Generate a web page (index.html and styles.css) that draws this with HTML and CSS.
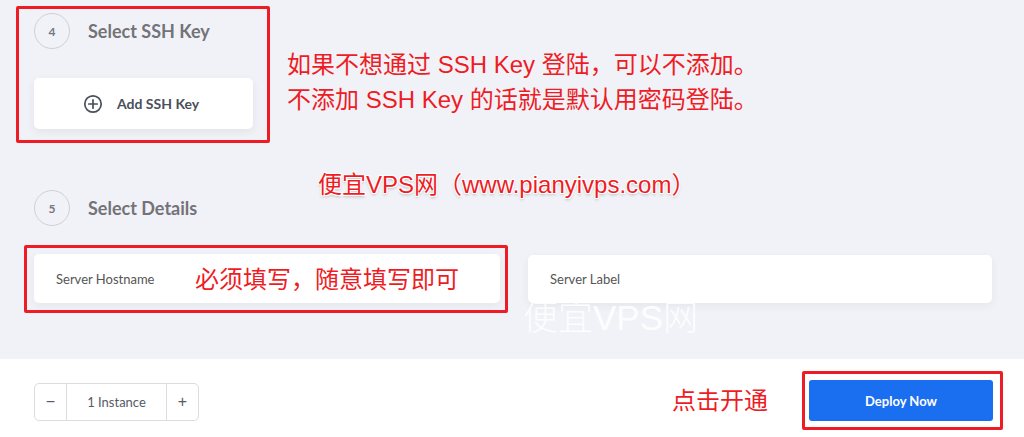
FILE: index.html
```html
<!DOCTYPE html>
<html lang="zh">

<head>
    <meta charset="UTF-8">
    <meta name="viewport" content="width=device-width, initial-scale=1.0">
    <link rel="stylesheet" href="styles.css">
</head>

<body>

    <div class="page">
        <div class="steps">
            <!-- Step 4 -->
            <div class="mark mark-ssh">
                <div class="step-head">
                    <span class="step-num">4</span>
                    <h2 class="step-title">Select SSH Key</h2>
                </div>
                <button class="add-card" type="button">
                    <svg width="20" height="20" viewBox="0 0 20 20">
                        <circle cx="10" cy="10" r="8.2" fill="none" stroke="#4a4f5c" stroke-width="1.7"/>
                        <path d="M10 5.8v8.4M5.8 10h8.4" stroke="#4a4f5c" stroke-width="1.7" stroke-linecap="round"/>
                    </svg>
                    <span>Add SSH Key</span>
                </button>
            </div>

            <!-- Step 5 -->
            <div class="step-head step-five">
                <span class="step-num">5</span>
                <h2 class="step-title">Select Details</h2>
            </div>
            <div class="details">
                <div class="mark mark-host">
                    <div class="field">Server Hostname</div>
                </div>
                <div class="field field-label">Server Label</div>
            </div>
        </div>

        <div class="footer">
            <div class="stepper">
                <button class="stepper-btn" type="button">−</button>
                <span class="stepper-value">1 Instance</span>
                <button class="stepper-btn" type="button">+</button>
            </div>
            <div class="deploy-group">
                <span class="note">点击开通</span>
                <div class="mark mark-deploy">
                    <button class="deploy-btn" type="button">Deploy Now</button>
                </div>
            </div>
        </div>

        <!-- 标注 -->
        <p class="note note-ssh">如果不想通过 SSH Key 登陆，可以不添加。<br>不添加 SSH Key 的话就是默认用密码登陆。</p>
        <p class="note note-site">便宜VPS网（www.pianyivps.com）</p>
        <p class="note note-host">必须填写，随意填写即可</p>
        <p class="watermark">便宜VPS网</p>
    </div>

</body>

</html>
```

FILE: styles.css
```css
body {
    margin: 0;
    background-color: #f1f2f7;
    font-family: Lato, "Noto Sans", Arial, sans-serif;
    color: #555;
}

.page {
    position: relative;
    width: 1024px;
    height: 437px;
    overflow: hidden;
}

.steps {
    height: 359px;
    box-sizing: border-box;
    padding-top: 6px;
}

.mark {
    border: 3px solid #ee1c25;
    border-radius: 2px;
}

.mark-ssh {
    margin-left: 16px;
    width: 254px;
    height: 137px;
    box-sizing: border-box;
    padding: 4px 0 0 15px;
}

.step-head {
    display: flex;
    align-items: center;
    gap: 18px;
    height: 36px;
}

.step-num {
    width: 36px;
    height: 36px;
    box-sizing: border-box;
    border: 1px solid #cfcfd4;
    border-radius: 50%;
    display: flex;
    justify-content: center;
    align-items: center;
    font-size: 12px;
    font-weight: bold;
    color: #77777c;
}

.step-title {
    margin: 0;
    font-size: 18px;
    font-weight: bold;
    color: #737378;
}

.add-card {
    margin-top: 29px;
    width: 219px;
    height: 51px;
    border: none;
    border-radius: 5px;
    background-color: #fff;
    box-shadow: 0 3px 8px rgba(40, 45, 70, 0.07);
    display: flex;
    align-items: center;
    padding: 0 0 0 49px;
    gap: 14px;
    font-family: inherit;
    font-size: 14px;
    font-weight: bold;
    color: #4a4f5c;
}

.step-five {
    margin: 47px 0 0 34px;
}

.details {
    display: flex;
    align-items: flex-start;
    gap: 20px;
    margin: 19px 0 0 24px;
}

.mark-host {
    padding: 6px 5px 7px 7px;
}

.field {
    width: 466px;
    height: 49px;
    box-sizing: border-box;
    background-color: #fff;
    border-radius: 5px;
    box-shadow: 0 3px 8px rgba(40, 45, 70, 0.06);
    display: flex;
    align-items: center;
    padding-left: 22px;
    font-size: 13px;
    color: #555;
}

.field-label {
    width: 464px;
    height: 48px;
    margin-top: 10px;
}

.footer {
    height: 78px;
    box-sizing: border-box;
    background-color: #fff;
    display: flex;
    justify-content: space-between;
    align-items: flex-start;
    padding: 0 21px 0 34px;
}

.stepper {
    display: flex;
    margin-top: 24px;
    height: 38px;
    border: 1px solid #dcdce0;
    border-radius: 5px;
    box-sizing: border-box;
}

.stepper-btn {
    width: 31px;
    border: none;
    background: none;
    font-size: 16px;
    color: #555a66;
    padding: 0;
}

.stepper-value {
    width: 99px;
    border-left: 1px solid #dcdce0;
    border-right: 1px solid #dcdce0;
    display: flex;
    justify-content: center;
    align-items: center;
    font-size: 13px;
    color: #555a66;
}

.deploy-group {
    display: flex;
    align-items: center;
    gap: 34px;
    margin-top: 12px;
}

.mark-deploy {
    padding: 6px 7px 6px 4px;
}

.deploy-btn {
    display: block;
    width: 184px;
    height: 41px;
    border: none;
    border-radius: 3px;
    background-color: #1a6ef0;
    color: #fff;
    font-family: inherit;
    font-size: 13px;
    font-weight: bold;
}

.note {
    margin: 0;
    font-family: "Liberation Sans", "Noto Sans CJK SC", sans-serif;
    color: #ee1c25;
    font-size: 24px;
    line-height: 1;
}

.note-ssh {
    position: absolute;
    left: 287px;
    top: 47px;
    line-height: 35px;
}

.note-site {
    position: absolute;
    left: 318px;
    top: 173px;
    text-shadow: 1px 1px 0 #fff, -1px -1px 0 #fff, 1px -1px 0 #fff, -1px 1px 0 #fff, 0 2px 3px rgba(0, 0, 0, 0.25);
}

.note-host {
    position: absolute;
    left: 195px;
    top: 268px;
}

.watermark {
    position: absolute;
    left: 523px;
    top: 297px;
    margin: 0;
    font-family: "Liberation Sans", "Noto Sans CJK SC", sans-serif;
    font-weight: 300;
    font-size: 35px;
    line-height: 1.2;
    color: rgba(255, 255, 255, 0.9);
}
```
